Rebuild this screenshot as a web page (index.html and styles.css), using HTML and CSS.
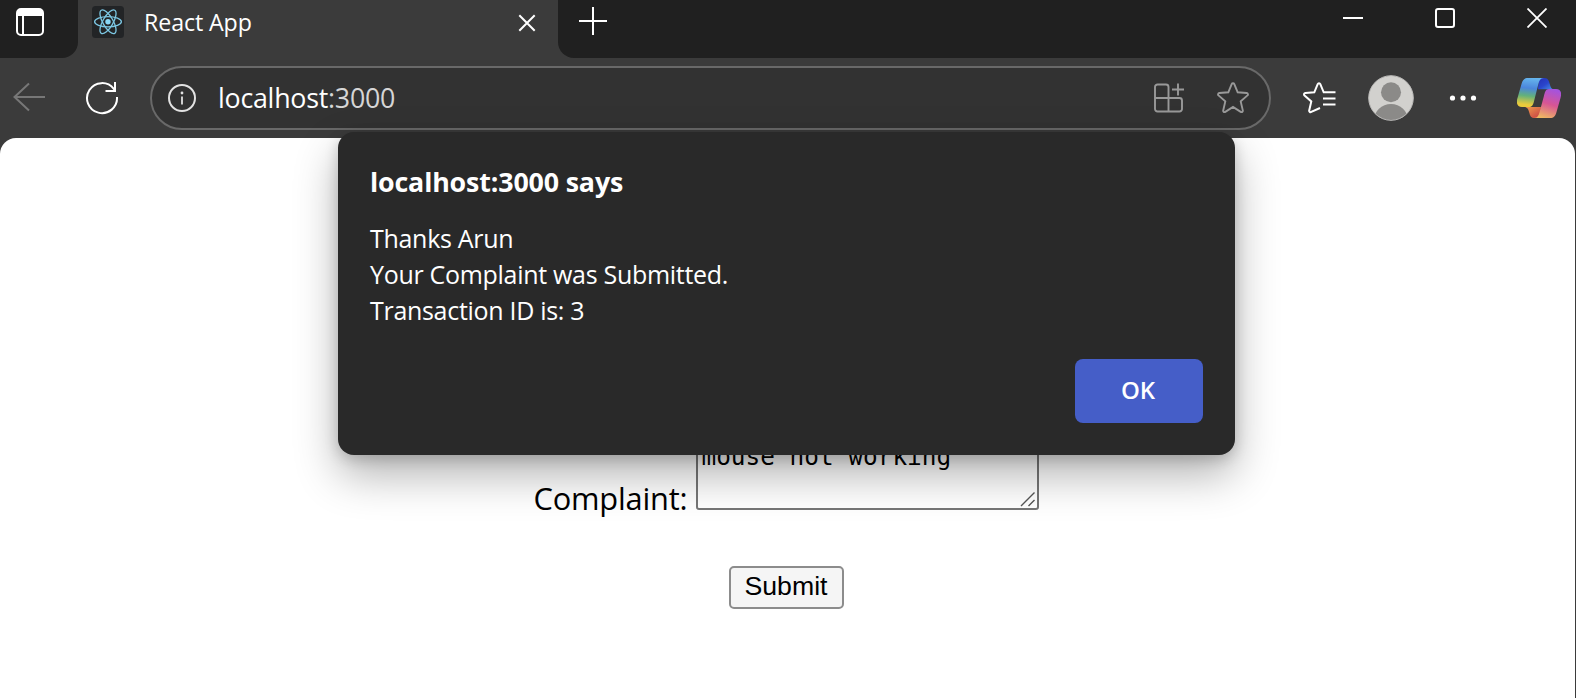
FILE: index.html
```html
<!DOCTYPE html>
<html lang="en">
<head>
<meta charset="utf-8">
<title>React App</title>
<link rel="stylesheet" href="styles.css">
</head>
<body>
<div class="browser">
  <header class="tabstrip">
    <div class="tab-actions">
      <svg class="icon" width="28" height="28" viewBox="0 0 28 28"><rect x="1" y="1" width="26" height="26" rx="4" fill="none" stroke="#fff" stroke-width="2"/><path d="M1 8V5a4 4 0 0 1 4-4h18a4 4 0 0 1 4 4v3zM6 8h2v19H6z" fill="#fff"/></svg>
    </div>
    <div class="tab">
      <svg class="favicon" width="32" height="32" viewBox="0 0 32 32"><rect width="32" height="32" rx="3.5" fill="#222426"/><g fill="none" stroke="#7cc7e3" stroke-width="1.3"><ellipse cx="16" cy="15.8" rx="13.4" ry="5.1"/><ellipse cx="16" cy="15.8" rx="13.4" ry="5.1" transform="rotate(60 16 15.8)"/><ellipse cx="16" cy="15.8" rx="13.4" ry="5.1" transform="rotate(120 16 15.8)"/></g><circle cx="16" cy="15.8" r="2.7" fill="#8ad8f6"/></svg>
      <span class="tab-title">React App</span>
      <svg class="tab-close" width="18" height="18" viewBox="0 0 18 18"><path d="M1.3 1.3 16.7 16.7M16.7 1.3 1.3 16.7" stroke="#fff" stroke-width="2"/></svg>
    </div>
    <div class="strip-rest">
      <svg class="plus" width="28" height="28" viewBox="0 0 28 28"><path d="M14 0v28M0 14h28" stroke="#fff" stroke-width="2"/></svg>
      <div class="window-controls">
        <svg width="20" height="20" viewBox="0 0 20 20"><path d="M0 10h20" stroke="#fff" stroke-width="2"/></svg>
        <svg width="20" height="20" viewBox="0 0 20 20"><rect x="1" y="1" width="18" height="18" rx="2" fill="none" stroke="#fff" stroke-width="2"/></svg>
        <svg width="20" height="20" viewBox="0 0 20 20"><path d="M.5.5 19.5 19.5M19.5.5.5 19.5" stroke="#fff" stroke-width="1.8"/></svg>
      </div>
    </div>
  </header>
  <nav class="toolbar">
    <svg class="back" width="32" height="30" viewBox="0 0 32 30"><path d="M16 1.5 1.5 15 16 28.5M1.5 15H32" fill="none" stroke="#777" stroke-width="2"/></svg>
    <svg class="reload" width="34" height="34" viewBox="0 0 34 34"><path d="M32 16A15 15 0 1 1 28.8 7.8L30 10M30 1v9H20.500" fill="none" stroke="#fff" stroke-width="2"/></svg>
    <div class="address">
      <svg class="info" width="28" height="28" viewBox="0 0 28 28"><circle cx="14" cy="14" r="13" fill="none" stroke="#e2e2e2" stroke-width="2"/><path d="M14 12.500v8" stroke="#e2e2e2" stroke-width="1.8"/><circle cx="14" cy="9" r="1.400" fill="#e2e2e2"/></svg>
      <span class="url">localhost<span class="port">:3000</span></span>
      <svg class="apps" width="30" height="30" viewBox="0 0 30 30"><path d="M1 15V4a2.500 2.500 0 0 1 2.500-2.500H12A2.500 2.500 0 0 1 14.500 4v24.500M1 15h24.500a2.500 2.500 0 0 1 2.500 2.500V26a2.500 2.500 0 0 1-2.500 2.500h-22A2.500 2.500 0 0 1 1 26V15M24 .5v12M18 6.500h12" fill="none" stroke="#999" stroke-width="1.9"/></svg>
      <svg class="star" width="32" height="32" viewBox="0 0 32 32"><path d="M14.700 2.100c.5-1.200 2.100-1.200 2.600 0l3.400 8.200 9 .7c1.200.1 1.700 1.600.8 2.400l-6.800 6 2.100 9c.3 1.200-1 2.200-2.100 1.500L16 25l-7.700 4.900c-1.100.7-2.400-.3-2.100-1.500l2.100-9-6.800-6c-.9-.8-.4-2.300.8-2.400l9-.7z" fill="none" stroke="#999" stroke-width="1.900"/></svg>
    </div>
    <svg class="favorites" width="34" height="32" viewBox="0 0 34 32"><path d="M22 10.300h-1.300l-3.400-8.200c-.5-1.200-2.100-1.200-2.600 0l-3.400 8.200-9 .7c-1.200.1-1.700 1.600-.8 2.400l6.800 6-2.100 9c-.3 1.200 1 2.200 2.100 1.500L17 26M20 10.300h12.500M20 16.500h12.500M20 22.500h12.500" fill="none" stroke="#fff" stroke-width="2"/></svg>
    <svg class="avatar" width="46" height="46" viewBox="0 0 46 46"><defs><clipPath id="face"><circle cx="23" cy="23" r="22"/></clipPath></defs><circle cx="23" cy="23" r="22.300" fill="#d2d1ce" stroke="#bebdbb"/><g fill="#8b8a88" clip-path="url(#face)"><circle cx="23" cy="17.300" r="10"/><ellipse cx="23" cy="45" rx="17" ry="16"/></g></svg>
    <svg class="more" width="28" height="6" viewBox="0 0 28 6"><g fill="#fff"><circle cx="3.500" cy="3" r="2.600"/><circle cx="14" cy="3" r="2.600"/><circle cx="24.500" cy="3" r="2.600"/></g></svg>
    <svg class="copilot" width="44" height="40" viewBox="0 0 44 40">
      <defs>
        <linearGradient id="cool" x1=".5" y1="0" x2=".4" y2="1"><stop offset="0" stop-color="#66b5ed"/><stop offset=".35" stop-color="#4b86dc"/><stop offset=".62" stop-color="#63b17b"/><stop offset=".92" stop-color="#eacb3c"/></linearGradient>
        <linearGradient id="warm" x1=".65" y1="0" x2=".35" y2="1"><stop offset="0" stop-color="#a553dd"/><stop offset=".5" stop-color="#d75594"/><stop offset="1" stop-color="#eeb763"/></linearGradient>
        <linearGradient id="blue" x1="0" y1="0" x2="1" y2="1"><stop offset="0" stop-color="#2530b5"/><stop offset=".5" stop-color="#2a45cc"/><stop offset="1" stop-color="#4b9be9"/></linearGradient>
        <linearGradient id="coral" x1="0" y1="0" x2="1" y2="1"><stop offset="0" stop-color="#f0a04e"/><stop offset="1" stop-color="#c63d43"/></linearGradient>
      </defs>
      <path d="M22 0h5.500c3.500 0 4.500 3 5.300 6 .8 3.300 1.700 5.300 4.700 5.300H21z" fill="url(#blue)"/>
      <path d="M23 40h-6c-3 0-4-2.500-4.800-5.500-.8-3.200-1.700-5.500-5.200-5.500h17z" fill="url(#coral)"/>
      <path d="M11 0h16c-4 0-5 3.500-6 7.500l-3.800 15C16.200 26.500 15.500 29 12 29H5c-5 0-6-4-4.500-9L4.500 6C5.700 2 7 0 11 0z" fill="url(#cool)"/>
      <path d="M33 40H17c4 0 5-3.500 6-7.500l3.800-14C27.800 14.500 28.500 11 32 11h7c5 0 6 4 4.500 9l-4 14c-1.200 4-2.500 6-6.500 6z" fill="url(#warm)"/>
    </svg>
  </nav>
  <main class="viewport">
    <form class="complaint-form">
      <div class="row">
        <label class="label" for="complaint">Complaint:</label>
        <div class="textarea" id="complaint">mouse not working<svg class="grip" width="16" height="16" viewBox="0 0 16 16"><path d="M1 15 14.500 1.500M8.500 15l6-6" stroke="#555" stroke-width="1.400"/></svg></div>
      </div>
      <button class="submit" type="button">Submit</button>
    </form>
  </main>
  <section class="dialog" role="alertdialog">
    <h1 class="dialog-title">localhost:3000 says</h1>
    <p class="message">Thanks Arun<br>Your Complaint was Submitted.<br>Transaction ID is: 3</p>
    <button class="ok" type="button">OK</button>
  </section>
</div>
</body>
</html>
```
FILE: styles.css
```css
* { box-sizing: border-box; }
body { margin: 0; overflow: hidden; font-family: "Open Sans", "Noto Sans", sans-serif; }
svg { display: block; flex: none; }
button { font: inherit; }

.browser { position: relative; display: flex; flex-direction: column; width: 1576px; height: 698px; background: #3b3b3b; }

.tabstrip { display: flex; height: 58px; color: #fff; }
.tab-actions { width: 78px; padding: 8px 16px; background: #202020; border-bottom-right-radius: 16px; }
.tab { display: flex; width: 480px; padding: 6px 22px 0 14px; align-items: flex-start; }
.tab-title { margin: -1px auto 0 20px; font-size: 23.2px; line-height: 34px; letter-spacing: -0.1px; white-space: nowrap; }
.tab-close { margin-top: 8px; }
.strip-rest { display: flex; flex: 1; justify-content: space-between; align-items: flex-start; padding: 7px 29px 0 21px; background: #202020; border-bottom-left-radius: 16px; }
.window-controls { display: flex; gap: 72px; padding-top: 1px; }

.toolbar { display: flex; align-items: center; height: 80px; padding: 0 15px 0 14px; }
.back { margin: 0 40px 2px -1px; }
.reload { margin-right: 31px; }
.address { display: flex; align-items: center; width: 1121px; height: 64px; padding: 0 20px 0 16px; border: 2px solid #696969; border-radius: 32px; background: #323232; }
.url { margin: 0 auto 0 22px; font-size: 26.800px; line-height: 36px; letter-spacing: -0.25px; color: #fff; }
.port { color: #d6d6d6; }
.apps { margin-right: 34px; }
.star { margin-left: -1px; }
.favorites { margin-left: 32px; margin-right: 31px; }
.avatar { margin-right: 35px; }
.more { margin-right: 40px; }

.viewport { flex: 1; margin-right: 1px; padding-top: 247px; background: #fff; border-radius: 16px 16px 0 0; }
.complaint-form { display: flex; flex-direction: column; align-items: center; color: #000; }
.row { display: flex; align-items: flex-end; height: 125px; margin-right: 3px; }
.label { width: 153px; margin-right: 9px; font-size: 30.8px; line-height: 40px; letter-spacing: -0.2px; white-space: nowrap; transform: translateY(8px); }
.textarea { position: relative; width: 343px; height: 85px; padding: 15px 4px; border: 2px solid #767676; border-radius: 3px; font-family: "DejaVu Sans Mono", monospace; font-size: 24.4px; line-height: 30px; }
.grip { position: absolute; right: 1px; bottom: 1px; }
.submit { width: 115px; height: 43px; margin: 56px 2px 0 0; padding: 0 1px 3px 0; border: 2px solid #8c8c8c; border-radius: 5px; background: #f5f5f5; color: #000; font-family: "Liberation Sans", Arial, sans-serif; font-size: 26.67px; line-height: 36px; }

.dialog { position: absolute; top: 132px; left: 338px; display: flex; flex-direction: column; width: 897px; height: 323px; padding: 32px; border-radius: 16px; background: #292929; color: #fff; box-shadow: 0 20px 44px rgba(0,0,0,.3), 0 4px 14px rgba(0,0,0,.18); }
.dialog-title { margin: 0 0 20px; font-size: 26.8px; line-height: 36px; font-weight: 700; letter-spacing: -0.15px; }
.message { margin: 0; font-size: 25px; line-height: 36px; letter-spacing: -0.3px; }
.ok { align-self: flex-end; width: 128px; height: 64px; margin-top: auto; padding: 0 2px 2px 0; border: 0; border-radius: 8px; background: #455ec8; color: #fff; font-size: 24px; font-weight: 600; line-height: 60px; }
```
